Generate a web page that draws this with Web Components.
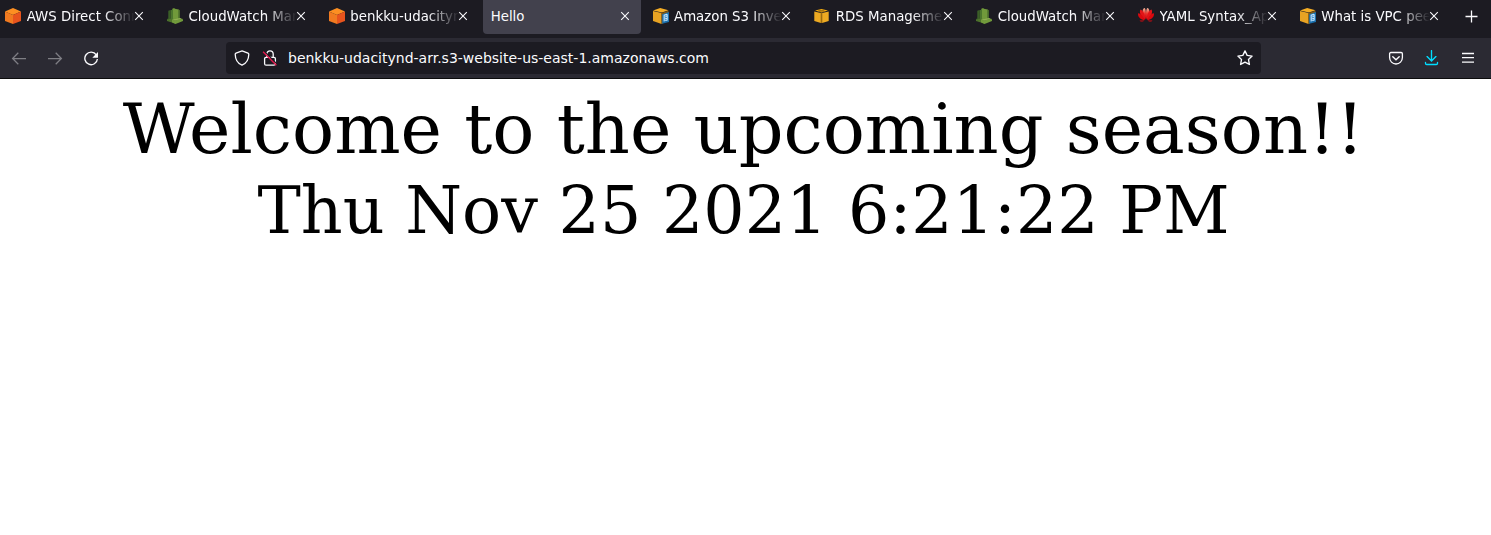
<!DOCTYPE html>
<html lang="en">
<head>
<meta charset="utf-8">
<title>Hello</title>
<style>
html,body{margin:0;height:100%;background:#fff;overflow:hidden}
</style>
</head>
<body>
<browser-window></browser-window>
<script>
const icons = {
  cube: `<svg viewBox="0 0 16 16"><path fill="#fd8f22" d="M8 0l8 3.500-8 3.500L0 3.500z"/><path fill="#f17a20" d="M0 3.500L8 7v9l-8-3z"/><path fill="#e8541d" d="M16 3.500L8 7v9l8-3z"/></svg>`,
  watch: `<svg viewBox="0 0 16 16"><path fill="#3b5f27" d="M1.300 2.800l2.400-.7v9.500L0 13V11l1.300-.6z"/><path fill="#4e742c" d="M0 12l8-3 8 3-8 3.600z"/><path fill="#719a3b" d="M5.300.7L7.500 0v11l-2.200-.5z"/><path fill="#4c762e" d="M3.700 2.200l2.300-.8v10l-2.300-.7z"/><path fill="#719a3b" d="M6.500.5L11.800 1.500v9.500l-4 1-1.300-.7z"/><path fill="#4e742c" d="M11.500 1.500l1.400.8v8.500l-1.400.5z"/><path fill="#719a3b" d="M5 11.500l3 1 7.500-1.800.5 1.600v.8L8.500 16 5 14.500z"/><path fill="#8fb052" d="M5 11.300l3 1.200 7-1.700-2-.7-4.500 1z"/><path fill="#4e742c" d="M0 11.700l5 1.500v1.300l-5-1.600z"/></svg>`,
  docs: `<svg viewBox="0 0 16 16"><path fill="#f5ad24" d="M7.200 0L15.500 2.200 9 4.400 0 2.400z"/><path fill="#e8a323" d="M0 3l8.600 1.900V16L0 13z"/><path fill="#855c14" d="M8.600 5l6.900-2.200v3L10 7v8.500l-1.400.5z"/><path fill="#1b70ad" d="M9.200 6.200L16 4v10l-6.800 1.700z"/><path fill="#c8e8ff" d="M10.600 6.700l3.200-1 .9.900v5.900l-4.100 1.100z"/><path d="M11.500 8.200l2-.5M11.500 10l2.300-.6M11.500 12l2-.5" stroke="#176eae" stroke-width=".9"/></svg>`,
  rds: `<svg viewBox="0 0 16 16"><path fill="#f5ad0f" d="M7.500 1L14 2.600 7.500 4.500 1 2.600z"/><path fill="#edaa22" d="M.3 3.400L6.900 5v10L.3 13zM14.700 3.400L8.100 5v10l6.600-2z"/><path fill="#9b6a10" d="M6.900 5h1.200v10H6.900z"/><path d="M4 2l6.500 1.700M10.500 2l-6 1.800" stroke="#755114" stroke-width=".6"/></svg>`,
  petals: `<svg viewBox="0 0 16 16"><defs><linearGradient id="r" x1="0" y1="0" x2="0" y2="1"><stop stop-color="#f3b59b"/><stop offset=".5" stop-color="#e9312a"/><stop offset="1" stop-color="#c50510"/></linearGradient></defs><g fill="url(#r)"><path d="M7.850 11.300C4 7 3.700 1.500 6.200.1 8 0 8.300 6.500 7.850 11.300zM8.150 11.300C12 7 12.300 1.500 9.800.1 8 0 7.700 6.500 8.150 11.300z"/><path fill="#e11418" d="M7.300 11.500C2.500 9 .9 4 2.500 1.500c2.800.5 4.600 6 4.800 10zM8.700 11.500c4.800-2.500 6.400-7.500 4.800-10-2.800.5-4.600 6-4.800 10z"/><path fill="#d9080e" d="M6.900 12.100C2.600 11.900-.6 8.500.1 5.300c3.300.3 5.500 4 6.800 6.800zM9.100 12.100c4.300-.2 7.500-3.600 6.800-6.800-3.300.3-5.500 4-6.800 6.800zM6.500 12.400H1.500c1.500 1.800 3.700 1.300 5 0zM9.500 12.400h5c-1.500 1.800-3.700 1.300-5 0z"/></g></svg>`,
  back: `<svg viewBox="0 0 16 16"><path stroke-width="1.250" d="M15 8.500H1.600M7.300 2.800L1.600 8.500l5.700 5.700"/></svg>`,
  forward: `<svg viewBox="0 0 16 16"><path stroke-width="1.250" d="M1 8.500h13.400M8.700 2.800l5.700 5.700-5.700 5.700"/></svg>`,
  reload: `<svg viewBox="0 0 16 16"><path stroke-width="1.350" d="M13.300 4.800A6.300 6.300 0 1 0 14.400 9"/><path fill="currentColor" stroke="none" d="M15 2v5.200a.5.500 0 0 1-.5.500H9.300z"/></svg>`,
  shield: `<svg viewBox="0 0 16 16"><path stroke-width="1.300" d="M8 .9l6 2.300c.5.200.8.600.8 1.100-.1 5-2 9-6.800 10.900C3.200 13.300 1.300 9.300 1.200 4.300c0-.5.300-.9.800-1.100z"/></svg>`,
  lock: `<svg viewBox="0 0 16 16"><rect x="2.600" y="7.300" width="10.800" height="7.900" rx="1.500" stroke-width="1.300"/><path stroke-width="1.300" d="M4.800 7V4a3.200 3.200 0 0 1 6.400 0v3"/><path stroke="#1c1b22" stroke-width="1.200" d="M2.100 1.100l13.300 13.300"/><path stroke="#e2184d" stroke-width="1.400" d="M1.100 1.700l13.300 13.500"/></svg>`,
  star: `<svg viewBox="0 0 16 16"><path stroke-width="1.350" stroke-linejoin="round" d="M8 .9l2.150 4.500 4.950.7-3.600 3.450.9 4.900L8 12.100l-4.400 2.350.9-4.900L.9 6.100l4.950-.7z"/></svg>`,
  pocket: `<svg viewBox="0 0 16 16"><path stroke-width="1.300" d="M2.900 2.500h10.200c.8 0 1.300.5 1.300 1.300v3.800a6.400 6.400 0 0 1-12.800 0V3.800c0-.8.500-1.300 1.300-1.300z"/><path stroke-width="1.400" stroke-linecap="round" d="M4.800 6.700L8 9.700l3.200-3"/></svg>`,
  download: `<svg viewBox="0 0 16 16"><path stroke-width="1.350" stroke-linecap="round" d="M7.500.6v10.300M3.100 6.600L7.500 11l4.400-4.400M1.500 12.400v.9c0 .7.500 1.200 1.200 1.200h9.600c.7 0 1.200-.5 1.200-1.200v-.9"/></svg>`,
  menu: `<svg viewBox="0 0 16 16"><path stroke-width="1.300" d="M2 3.500h12M2 7.700h12M2 12.100h12"/></svg>`,
  close: `<svg viewBox="0 0 16 16"><path stroke-width="1.080" d="M4.200 4.200l7.600 7.600M11.800 4.200l-7.600 7.600"/></svg>`,
  plus: `<svg viewBox="0 0 16 16"><path stroke-width="1.300" d="M8.500 2.500v12M2.500 8.500h12"/></svg>`
};

class UiIcon extends HTMLElement {
  connectedCallback() {
    this.attachShadow({mode: 'open'}).innerHTML = `<style>
      :host{display:block;width:16px;height:16px;flex:none}
      svg{display:block;width:100%;height:100%;fill:none;stroke-width:1.1}
      .line{stroke:currentColor}
    </style>` + icons[this.getAttribute('name')];
    if (!/^(cube|watch|docs|rds|petals)$/.test(this.getAttribute('name')))
      this.shadowRoot.querySelector('svg').classList.add('line');
  }
}
customElements.define('ui-icon', UiIcon);

class BrowserTab extends HTMLElement {
  connectedCallback() {
    const icon = this.getAttribute('icon');
    this.attachShadow({mode: 'open'}).innerHTML = `<style>
      :host{display:block;flex:none;box-sizing:border-box;width:161.83px;height:34px;padding:0 2px}
      .tab{display:flex;align-items:center;height:100%;box-sizing:border-box;padding:0 8px 2px;border-radius:0 0 4px 4px}
      :host([selected]) .tab{background:#42414d}
      .fav{margin-right:5.5px}
      .label{flex:1;min-width:0;overflow:hidden;white-space:nowrap;line-height:20px;padding-top:2px;margin-right:-4px}
      :host(:not([selected])) .label{-webkit-mask-image:linear-gradient(to left,transparent,#000 32px);mask-image:linear-gradient(to left,transparent,#000 32px)}
    </style><div class="tab">${icon ? `<ui-icon class="fav" name="${icon}"></ui-icon>` : ''}<span class="label"><slot></slot></span><ui-icon name="close"></ui-icon></div>`;
  }
}
customElements.define('browser-tab', BrowserTab);

class TabStrip extends HTMLElement {
  connectedCallback() {
    this.attachShadow({mode: 'open'}).innerHTML = `<style>
      :host{display:flex;height:38px;background:#1c1b22;color:#fbfbfe;font:13.333px "DejaVu Sans",sans-serif;overflow:hidden}
      .tabs{display:flex;margin-left:-4.800px}
      .plus{margin:8px 0 0 11.350px}
    </style><div class="tabs"><slot></slot></div><ui-icon class="plus" name="plus"></ui-icon>`;
  }
}
customElements.define('tab-strip', TabStrip);

class NavBar extends HTMLElement {
  connectedCallback() {
    this.attachShadow({mode: 'open'}).innerHTML = `<style>
      :host{display:flex;align-items:center;box-sizing:border-box;height:41px;background:#2b2a33;border-bottom:1px solid #0c0c0d;color:#fbfbfe;font:14px "DejaVu Sans",sans-serif}
      .nav{display:flex;gap:20px;padding-left:11px;width:215px;flex:none}
      .off{opacity:.4}
      .url{display:flex;align-items:center;box-sizing:border-box;width:1035px;height:32px;padding:0 8px;background:#1c1b22;border-radius:4px;flex:none}
      .lock{margin-left:12px}
      .addr{flex:1;margin-left:10px;white-space:nowrap;line-height:20px}
      .tools{display:flex;gap:20px;margin-left:127px}
      .dl{color:#00ddff}
    </style>
    <div class="nav"><ui-icon class="off" name="back"></ui-icon><ui-icon class="off" name="forward"></ui-icon><ui-icon name="reload"></ui-icon></div>
    <div class="url"><ui-icon name="shield"></ui-icon><ui-icon class="lock" name="lock"></ui-icon><span class="addr"><slot></slot></span><ui-icon name="star"></ui-icon></div>
    <div class="tools"><ui-icon name="pocket"></ui-icon><ui-icon class="dl" name="download"></ui-icon><ui-icon name="menu"></ui-icon></div>`;
  }
}
customElements.define('nav-bar', NavBar);

class WelcomePage extends HTMLElement {
  connectedCallback() {
    this.attachShadow({mode: 'open'}).innerHTML = `<style>
      :host{display:block;padding:9px 12px 0 8px;color:#000;font-family:"DejaVu Serif",serif;text-align:center;white-space:nowrap}
      .title{font-size:70px;line-height:82px}
      .time{font-size:65px;line-height:82px}
    </style><div class="title">Welcome to the upcoming season!!</div><div class="time">Thu Nov 25 2021 6:21:22 PM</div>`;
  }
}
customElements.define('welcome-page', WelcomePage);

class BrowserWindow extends HTMLElement {
  connectedCallback() {
    this.attachShadow({mode: 'open'}).innerHTML = `<style>:host{display:block;height:535px;overflow:hidden;background:#fff}</style>
    <tab-strip>
      <browser-tab icon="cube">AWS Direct Connect</browser-tab>
      <browser-tab icon="watch">CloudWatch Management</browser-tab>
      <browser-tab icon="cube">benkku-udacitynd-arr</browser-tab>
      <browser-tab selected>Hello</browser-tab>
      <browser-tab icon="docs">Amazon S3 Inventory</browser-tab>
      <browser-tab icon="rds">RDS Management</browser-tab>
      <browser-tab icon="watch">CloudWatch Management</browser-tab>
      <browser-tab icon="petals">YAML Syntax_Application</browser-tab>
      <browser-tab icon="docs">What is VPC peering</browser-tab>
    </tab-strip>
    <nav-bar>benkku-udacitynd-arr.s3-website-us-east-1.amazonaws.com</nav-bar>
    <welcome-page></welcome-page>`;
  }
}
customElements.define('browser-window', BrowserWindow);
</script>
</body>
</html>
